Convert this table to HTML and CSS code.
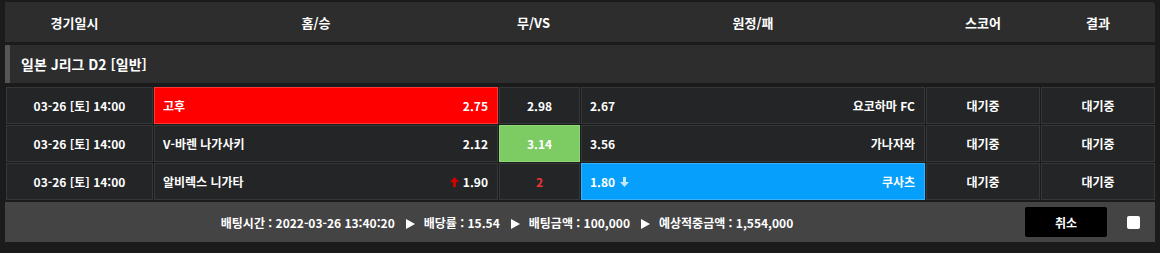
FILE: index.html
```html
<!DOCTYPE html>
<html lang="ko">
<head>
<meta charset="utf-8">
<link rel="stylesheet" href="styles.css">
</head>
<body>
<div class="board">
  <div class="head">
    <div class="c-date">경기일시</div>
    <div class="c-home">홈/승</div>
    <div class="c-draw">무/VS</div>
    <div class="c-away">원정/패</div>
    <div class="c-score">스코어</div>
    <div class="c-result">결과</div>
  </div>
  <div class="league">일본 J리그 D2 [일반]</div>
  <div class="rows">
    <div class="row">
      <div class="cell c-date center">03-26 [토] 14:00</div>
      <div class="cell c-home split red"><span>고후</span><span>2.75</span></div>
      <div class="cell c-draw center">2.98</div>
      <div class="cell c-away split"><span>2.67</span><span>요코하마 FC</span></div>
      <div class="cell c-score center">대기중</div>
      <div class="cell c-result center">대기중</div>
    </div>
    <div class="row">
      <div class="cell c-date center">03-26 [토] 14:00</div>
      <div class="cell c-home split"><span>V-바렌 나가사키</span><span>2.12</span></div>
      <div class="cell c-draw center green">3.14</div>
      <div class="cell c-away split"><span>3.56</span><span>가나자와</span></div>
      <div class="cell c-score center">대기중</div>
      <div class="cell c-result center">대기중</div>
    </div>
    <div class="row">
      <div class="cell c-date center">03-26 [토] 14:00</div>
      <div class="cell c-home split"><span>알비렉스 니가타</span><span class="odd"><svg class="arr" width="9" height="10" viewBox="0 0 9 10"><path d="M4.5 0 L9 5 L6 5 L6 10 L3 10 L3 5 L0 5 Z" fill="#d40000"/></svg>1.90</span></div>
      <div class="cell c-draw center redtxt">2</div>
      <div class="cell c-away split blue"><span class="odd">1.80<svg class="arr down" width="9" height="10" viewBox="0 0 9 10"><path d="M4.5 10 L9 5 L6 5 L6 0 L3 0 L3 5 L0 5 Z" fill="#bfe6ff"/></svg></span><span>쿠사츠</span></div>
      <div class="cell c-score center">대기중</div>
      <div class="cell c-result center">대기중</div>
    </div>
  </div>
  <div class="foot">
    <div class="info">배팅시간 : 2022-03-26 13:40:20<span class="tri"></span>배당률 : 15.54<span class="tri"></span>배팅금액 : 100,000<span class="tri"></span>예상적중금액 : 1,554,000</div>
    <button class="cancel">취소</button>
    <span class="chk"></span>
  </div>
</div>
</body>
</html>
```
FILE: styles.css
```css
* { box-sizing: border-box; }
html, body { margin: 0; padding: 0; }
body {
  background: #1b1b1b;
  font-family: "Noto Sans CJK KR", "Noto Sans", sans-serif;
  color: #fff;
  font-weight: 700;
  width: 1160px;
  height: 253px;
  overflow: hidden;
}
.board {
  padding: 2px 5px 0 5px;
}
.head {
  display: flex;
  gap: 1px;
  height: 40px;
  background: #2d2d2d;
  border-radius: 0 3px 0 0;
  align-items: center;
  font-size: 13px;
  padding-left: 1px;
}
.head > div { text-align: center; }
.head .c-date { padding-right: 10px; }
.head .c-home { padding-right: 20px; }
.head .c-draw { padding-right: 12px; }
.c-date { width: 147px; flex: none; }
.c-home { width: 344px; flex: none; }
.c-draw { width: 81px; flex: none; }
.c-away { width: 344px; flex: none; }
.c-score { width: 114px; flex: none; }
.c-result { width: 114px; flex: none; }
.league {
  margin-top: 3px;
  height: 38px;
  background: #2d2d2d;
  border-left: 5px solid #555;
  font-size: 14px;
  display: flex;
  align-items: center;
  padding-left: 11px;
}
.rows {
  margin-top: 4px;
  display: flex;
  flex-direction: column;
  gap: 1px;
  padding-left: 1px;
}
.row {
  display: flex;
  gap: 1px;
  height: 37px;
}
.cell {
  background: #242526;
  border: 1px solid #363738;
  font-size: 12px;
  display: flex;
  align-items: center;
}
.center { justify-content: center; }
.split { justify-content: space-between; padding: 0 9px 0 8px; }
.red { background: #ff0000; border-color: #ff3a3a; }
.green { background: #7ccb63; border-color: #8fd878; }
.blue { background: #069ffc; border-color: #3ab3ff; }
.redtxt { color: #ee3333; }
.odd { display: flex; align-items: center; }
.arr { margin-right: 4px; }
.arr.down { margin-right: 0; margin-left: 5px; }
.foot {
  margin-top: 2px;
  height: 40px;
  background: #444;
  display: flex;
  align-items: center;
  font-size: 12px;
}
.info {
  width: 1004px;
  text-align: center;
}
.tri {
  display: inline-block;
  width: 0;
  height: 0;
  border-left: 9px solid #fff;
  border-top: 5px solid transparent;
  border-bottom: 5px solid transparent;
  margin: 0 9px 0 11px;
  vertical-align: -1px;
}
.cancel {
  margin-left: 16px;
  width: 82px;
  height: 30px;
  background: #000;
  border: none;
  border-radius: 2px;
  color: #fff;
  font-family: inherit;
  font-weight: 700;
  font-size: 12px;
}
.chk {
  margin-left: 20px;
  width: 13px;
  height: 13px;
  background: #fff;
  border-radius: 2px;
}
```
